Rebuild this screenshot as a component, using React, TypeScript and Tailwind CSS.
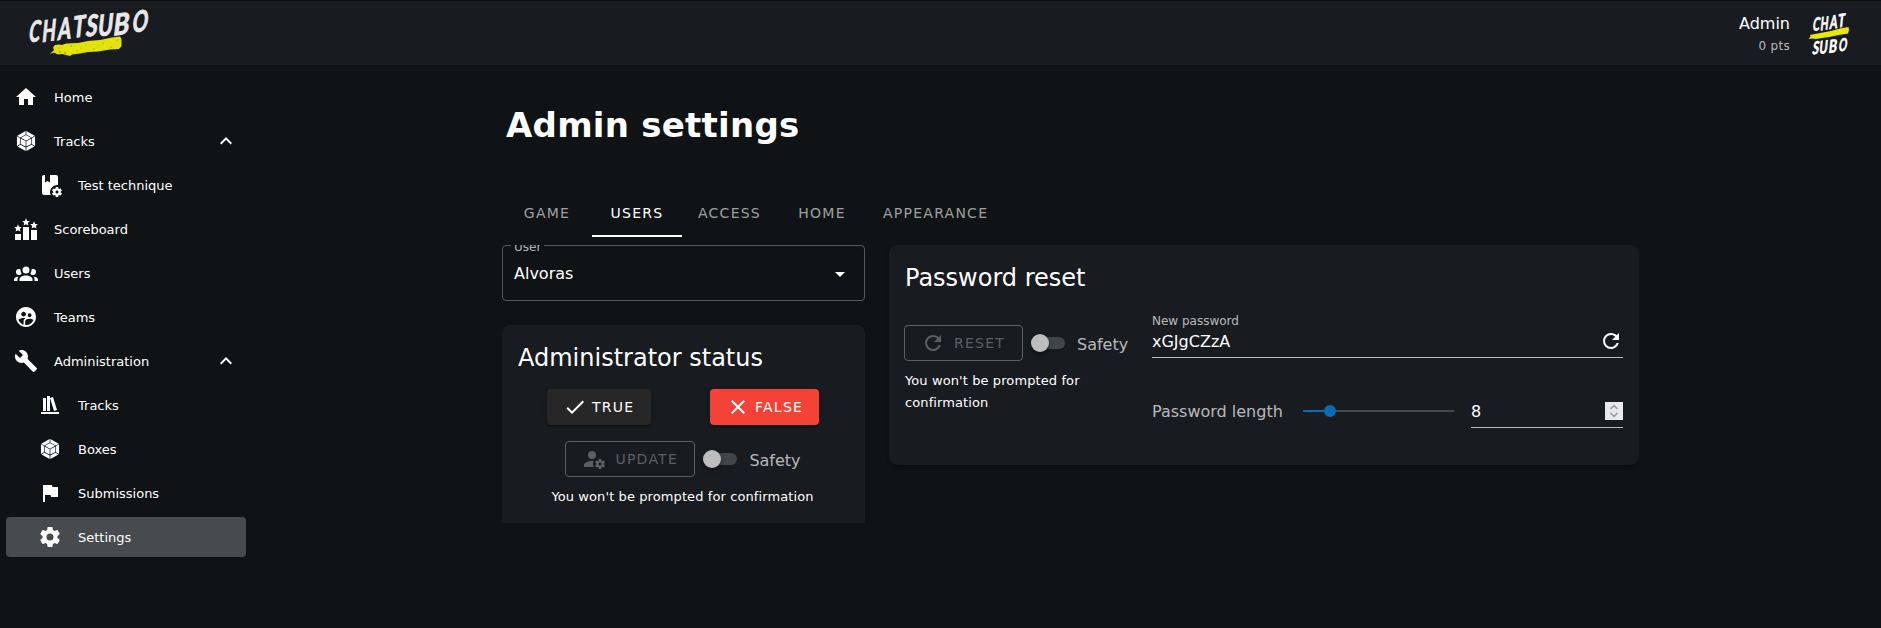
import React from "react";
import { MdSupervisedUserCircle } from "react-icons/md";
import { SiWebpack } from "react-icons/si";

const COG =
  "M17 12C16.87 12 16.76 12.09 16.74 12.21L16.55 13.53C16.25 13.66 15.96 13.82 15.7 14L14.46 13.5C14.35 13.5 14.22 13.5 14.15 13.63L13.15 15.36C13.09 15.47 13.11 15.6 13.21 15.68L14.27 16.5C14.25 16.67 14.24 16.83 14.24 17C14.24 17.17 14.25 17.33 14.27 17.5L13.21 18.32C13.12 18.4 13.09 18.53 13.15 18.64L14.15 20.37C14.21 20.5 14.34 20.5 14.46 20.5L15.7 20C15.96 20.18 16.24 20.35 16.55 20.47L16.74 21.79C16.76 21.91 16.86 22 17 22H19C19.11 22 19.22 21.91 19.24 21.79L19.43 20.47C19.73 20.34 20 20.18 20.27 20L21.5 20.5C21.63 20.5 21.76 20.5 21.83 20.37L22.83 18.64C22.89 18.53 22.86 18.4 22.77 18.32L21.7 17.5C21.72 17.33 21.74 17.17 21.74 17C21.74 16.83 21.73 16.67 21.7 16.5L22.76 15.68C22.85 15.6 22.88 15.47 22.82 15.36L21.82 13.63C21.76 13.5 21.63 13.5 21.5 13.5L20.27 14C20 13.82 19.73 13.65 19.42 13.53L19.23 12.21C19.22 12.09 19.11 12 19 12H17M18 15.5C18.83 15.5 19.5 16.17 19.5 17C19.5 17.84 18.83 18.5 18 18.5C17.16 18.5 16.5 17.84 16.5 17C16.5 16.17 17.17 15.5 18 15.5Z";

const PATHS = {
  home: "M10,20V14H14V20H19V12H22L12,3L2,12H5V20H10Z",
  chevronUp: "M7.41,15.41L12,10.83L16.59,15.41L18,14L12,8L6,14L7.41,15.41Z",
  group:
    "M12,5.5A3.5,3.5 0 0,1 15.5,9A3.5,3.5 0 0,1 12,12.5A3.5,3.5 0 0,1 8.5,9A3.5,3.5 0 0,1 12,5.5M5,8C5.56,8 6.08,8.15 6.53,8.42C6.38,9.85 6.8,11.27 7.66,12.38C7.16,13.34 6.16,14 5,14A3,3 0 0,1 2,11A3,3 0 0,1 5,8M19,8A3,3 0 0,1 22,11A3,3 0 0,1 19,14C17.84,14 16.84,13.34 16.34,12.38C17.2,11.27 17.62,9.85 17.47,8.42C17.92,8.15 18.44,8 19,8M5.5,18.25C5.5,16.18 8.41,14.5 12,14.5C15.59,14.5 18.5,16.18 18.5,18.25V20H5.5V18.25M0,20V18.5C0,17.11 1.89,15.94 4.45,15.6C3.86,16.28 3.5,17.22 3.5,18.25V20H0M24,20H20.5V18.25C20.5,17.22 20.14,16.28 19.55,15.6C22.11,15.94 24,17.11 24,18.5V20Z",
  wrench:
    "M22.7,19L13.6,9.9C14.5,7.6 14,4.9 12.1,3C10.1,1 7.1,0.6 4.7,1.7L9,6L6,9L1.6,4.7C0.4,7.1 0.9,10.1 2.9,12.1C4.8,14 7.5,14.5 9.8,13.6L18.9,22.7C19.3,23.1 19.9,23.1 20.3,22.7L22.6,20.4C23.1,20 23.1,19.3 22.7,19Z",
  bookshelf: "M9 3V18H12V3H9M12 5L16 18L19 17L15 4L12 5M5 5V18H8V5H5M3 19V21H21V19H3Z",
  flag: "M14.4,6L14,4H5V21H7V14H12.6L13,16H20V6H14.4Z",
  cog: "M12,15.5A3.5,3.5 0 0,1 8.5,12A3.5,3.5 0 0,1 12,8.5A3.5,3.5 0 0,1 15.5,12A3.5,3.5 0 0,1 12,15.5M19.43,12.97C19.47,12.65 19.5,12.33 19.5,12C19.5,11.67 19.47,11.34 19.43,11L21.54,9.37C21.73,9.22 21.78,8.95 21.66,8.73L19.66,5.27C19.54,5.05 19.27,4.96 19.05,5.05L16.56,6.05C16.04,5.66 15.5,5.32 14.87,5.07L14.5,2.42C14.46,2.18 14.25,2 14,2H10C9.75,2 9.54,2.18 9.5,2.42L9.13,5.07C8.5,5.32 7.96,5.66 7.44,6.05L4.95,5.05C4.73,4.96 4.46,5.05 4.34,5.27L2.34,8.73C2.21,8.95 2.27,9.22 2.46,9.37L4.57,11C4.53,11.34 4.5,11.67 4.5,12C4.5,12.33 4.53,12.65 4.57,12.97L2.46,14.63C2.27,14.78 2.21,15.05 2.34,15.27L4.34,18.73C4.46,18.95 4.73,19.03 4.95,18.95L7.44,17.94C7.96,18.34 8.5,18.68 9.13,18.93L9.5,21.58C9.54,21.82 9.75,22 10,22H14C14.25,22 14.46,21.82 14.5,21.58L14.87,18.93C15.5,18.67 16.04,18.34 16.56,17.94L19.05,18.95C19.27,19.03 19.54,18.95 19.66,18.73L21.66,15.27C21.78,15.05 21.73,14.78 21.54,14.63L19.43,12.97Z",
  check: "M21,7L9,19L3.5,13.5L4.91,12.09L9,16.17L19.59,5.59L21,7Z",
  close:
    "M19,6.41L17.59,5L12,10.59L6.41,5L5,6.41L10.59,12L5,17.59L6.41,19L12,13.41L17.59,19L19,17.59L13.41,12L19,6.41Z",
  refresh:
    "M17.65,6.35C16.2,4.9 14.21,4 12,4A8,8 0 0,0 4,12A8,8 0 0,0 12,20C15.73,20 18.84,17.45 19.73,14H17.65C16.83,16.33 14.61,18 12,18A6,6 0 0,1 6,12A6,6 0 0,1 12,6C13.66,6 15.14,6.69 16.22,7.78L13,11H20V4L17.65,6.35Z",
  menuDown: "M7,10L12,15L17,10H7Z",
  accountCog:
    "M10 4A4 4 0 0 0 6 8A4 4 0 0 0 10 12A4 4 0 0 0 14 8A4 4 0 0 0 10 4M10 14C5.58 14 2 15.79 2 18V20H11.68A7 7 0 0 1 11 17A7 7 0 0 1 11.64 14.09C11.11 14.03 10.56 14 10 14" +
    COG,
  book: "M6 2H7V9.5L9.5 8L12 9.5V2H18A2 2 0 0 1 20 4V12.1A7 7 0 0 0 12.7 22H6A2 2 0 0 1 4 20V4A2 2 0 0 1 6 2Z",
};

function Icon({ name, className = "" }: { name: keyof typeof PATHS; className?: string }) {
  return (
    <svg viewBox="0 0 24 24" className={`size-6 shrink-0 fill-current ${className}`}>
      <path d={PATHS[name]} />
    </svg>
  );
}

function BookCogIcon() {
  return (
    <svg viewBox="0 0 24 24" className="size-6 fill-current">
      <path d={PATHS.book} />
      <path d={COG} transform="translate(1 2)" />
    </svg>
  );
}

function RankingIcon() {
  const star = "M0-4L1.1-1.4L3.8-1.2L1.8.6L2.4 3.3L0 1.9L-2.4 3.3L-1.8.6L-3.8-1.2L-1.1-1.4Z";
  return (
    <svg viewBox="0 0 24 24" className="size-6 fill-current">
      <path d="M1 17H7V23H1ZM9 10H15V23H9ZM17 13H23V23H17Z" />
      <path d={star} transform="translate(4 11.3)" />
      <path d={star} transform="translate(12 5.3)" />
      <path d={star} transform="translate(20 8.3)" />
    </svg>
  );
}

const PackIcon = () => (
  <span className="flex size-6 items-center justify-center">
    <SiWebpack className="size-5" />
  </span>
);

type Letter = [char: string, x: number, y: number, tilt: number, squeeze: number];

function BrushWord({ letters, size }: { letters: Letter[]; size: number }) {
  return (
    <g fontFamily="Lato, 'Liberation Sans', sans-serif" fontWeight="700" fontStyle="italic" fontSize={size} textAnchor="middle">
      {letters.map(([c, x, y, tilt, squeeze], i) => (
        <text key={i} transform={`translate(${x} ${y}) rotate(${tilt}) skewX(-9) scale(${squeeze} 1)`}>
          {c}
        </text>
      ))}
    </g>
  );
}

function WideLogo() {
  return (
    <svg viewBox="0 0 136 56" className="mt-[7px] h-14 w-[136px]">
      <path
        fill="#e3e30c"
        d="M30 46L34 42L33 39.5L35 37L39 36.5L42 37L46 35.5L58 35L68 33L80 32L92 29.5L100 28.5L101.5 31L101.5 38L99 41L90 41.5L78 43.5L68 44L60 45.5L52 46.5L50 48L42 46L38 46.5L34 44.5Z"
      />
      <g fill="#77790f">
        <circle cx="39" cy="40" r=".6" />
        <circle cx="40" cy="44" r=".8" />
        <circle cx="45" cy="45" r=".7" />
        <circle cx="51" cy="38" r=".6" />
        <circle cx="57" cy="43" r=".6" />
        <circle cx="61" cy="40" r=".4" />
        <circle cx="66" cy="37" r=".5" />
        <circle cx="74" cy="41" r=".6" />
        <circle cx="78" cy="37" r=".4" />
        <circle cx="83" cy="35" r=".5" />
        <circle cx="91" cy="39" r=".6" />
        <circle cx="97" cy="32" r=".5" />
      </g>
      <g fill="#e8e8e8" stroke="#e8e8e8" strokeWidth=".9">
        <BrushWord
          size={29}
          letters={[
            ["C", 14, 33.5, -4, 0.62],
            ["H", 29, 33, -8, 0.66],
            ["A", 44.5, 31, -8, 0.7],
            ["T", 59, 29, -8, 0.76],
            ["S", 71.5, 28, -6, 0.78],
            ["U", 85.5, 27.5, -8, 0.76],
            ["B", 101.5, 26.5, -8, 0.9],
            ["O", 119.5, 23.5, -4, 0.7],
          ]}
        />
      </g>
    </svg>
  );
}

function SquareLogo() {
  return (
    <svg viewBox="0 0 48 48" className="size-12">
      <g fill="#fff" stroke="#fff" strokeWidth=".6">
        <BrushWord
          size={18}
          letters={[
            ["C", 9, 22.5, -4, 0.62],
            ["H", 17.5, 22, -8, 0.62],
            ["A", 26.5, 20.5, -8, 0.66],
            ["T", 34.5, 19, -8, 0.7],
          ]}
        />
        <BrushWord
          size={17.5}
          letters={[
            ["S", 8.5, 46, -4, 0.7],
            ["U", 16.5, 45.5, -8, 0.7],
            ["B", 26, 44.5, -8, 0.78],
            ["O", 35.5, 43, -4, 0.62],
          ]}
        />
      </g>
      <path
        fill="#e8e80c"
        d="M1.5 31L3.5 28.5L3 27L8 26L16 24.5L24 23L33 20.5L41.5 19L42 22L41 25.5L32 27L22 29L15 30L9 31L5 30.5Z"
      />
    </svg>
  );
}

type NavItem = { label: string; icon: React.ReactNode; nested?: boolean; open?: boolean; active?: boolean };

const NAV: NavItem[] = [
  { label: "Home", icon: <Icon name="home" /> },
  { label: "Tracks", icon: <PackIcon />, open: true },
  { label: "Test technique", icon: <BookCogIcon />, nested: true },
  { label: "Scoreboard", icon: <RankingIcon /> },
  { label: "Users", icon: <Icon name="group" /> },
  { label: "Teams", icon: <MdSupervisedUserCircle className="size-6" /> },
  { label: "Administration", icon: <Icon name="wrench" />, open: true },
  { label: "Tracks", icon: <Icon name="bookshelf" />, nested: true },
  { label: "Boxes", icon: <PackIcon />, nested: true },
  { label: "Submissions", icon: <Icon name="flag" />, nested: true },
  { label: "Settings", icon: <Icon name="cog" />, nested: true, active: true },
];

function Sidebar() {
  return (
    <nav className="flex w-[246px] shrink-0 flex-col gap-1 pt-3 pl-1.5">
      {NAV.map((item, i) => (
        <a
          key={i}
          className={`flex h-10 items-center rounded pr-2 ${item.nested ? "pl-8" : "pl-2"} ${
            item.active ? "bg-[#484b4d]" : ""
          }`}
        >
          {item.icon}
          <span className="ml-4 flex-1 pt-px text-[13px] leading-4">{item.label}</span>
          {item.open && <Icon name="chevronUp" />}
        </a>
      ))}
    </nav>
  );
}

function Tabs() {
  const tabs = ["Game", "Users", "Access", "Home", "Appearance"];
  return (
    <div className="flex h-12">
      {tabs.map((t) => (
        <button
          key={t}
          className={`min-w-[90px] border-b-2 px-4 pt-0.5 text-sm tracking-[1.25px] uppercase ${
            t === "Users" ? "border-white text-white" : "border-transparent text-white/60"
          }`}
        >
          {t}
        </button>
      ))}
    </div>
  );
}

function SafetySwitch() {
  return (
    <label className="flex items-center">
      <span className="flex h-3 w-[34px] items-center rounded-full bg-[#424549]">
        <span className="size-[18px] shrink-0 rounded-full bg-[#bdbdbd] shadow-[0_2px_4px_rgba(0,0,0,0.4)]" />
      </span>
      <span className="ml-3 pt-1 text-base leading-5 text-white/70">Safety</span>
    </label>
  );
}

function UserSelect() {
  return (
    <fieldset className="-mt-[9px] h-[65px] rounded border border-[#56595b]">
      <legend className="ml-2 h-[18px] w-[33px] pt-0.5 pl-[3px] text-xs leading-[18px] text-white/70">User</legend>
      <div className="flex h-10 items-center justify-between pr-3 pl-[11px]">
        <span className="text-base leading-5">Alvoras</span>
        <Icon name="menuDown" />
      </div>
    </fieldset>
  );
}

const BTN = "flex h-9 items-center rounded text-sm tracking-[1.25px] uppercase ";
const RAISED = "shadow-[0_3px_1px_-2px_rgba(0,0,0,0.2),0_2px_2px_rgba(0,0,0,0.14),0_1px_5px_rgba(0,0,0,0.12)] ";

function StatusCard() {
  return (
    <section className={RAISED + "mt-6 h-[260px] rounded-lg bg-[#181b1f] px-4 pt-[17px]"}>
      <h2 className="text-2xl leading-8">Administrator status</h2>
      <div className="mt-[15px] flex justify-center gap-[59px] pr-px">
        <button className={BTN + RAISED + "w-[104px] gap-[5px] bg-[#272727] pl-4"}>
          <Icon name="check" />
          True
        </button>
        <button className={BTN + RAISED + "w-[109px] gap-[5px] bg-[#f44336] pl-4"}>
          <Icon name="close" />
          False
        </button>
      </div>
      <div className="mt-4 flex justify-center gap-2 pr-px">
        <button className={BTN + "w-[130px] gap-[9px] border border-[#5d5f62] pl-4 text-[#5d5f62]"}>
          <Icon name="accountCog" />
          Update
        </button>
        <SafetySwitch />
      </div>
      <p className="mt-[9px] pr-0.5 text-center text-[13px] leading-[22px] tracking-[0.1px]">
        You won't be prompted for confirmation
      </p>
    </section>
  );
}

function PasswordCard() {
  return (
    <section className={RAISED + "h-[220px] w-[750px] rounded-lg bg-[#181b1f] px-4 pt-[17px]"}>
      <h2 className="text-2xl leading-8">Password reset</h2>
      <div className="flex">
        <div className="w-[247px] pt-[31px]">
          <div className="-ml-px flex gap-2">
            <button className={BTN + "w-[119px] gap-[9px] border border-[#5d5f62] pl-4 text-[#5d5f62]"}>
              <Icon name="refresh" />
              Reset
            </button>
            <SafetySwitch />
          </div>
          <p className="mt-[9px] w-[200px] text-[13px] leading-[22px] tracking-[0.1px]">
            You won't be prompted for confirmation
          </p>
        </div>
        <div className="w-[471px] pt-[18px]">
          <div className="flex h-[46px] items-end justify-between border-b border-white/70 pb-1">
            <div>
              <div className="text-xs leading-4 text-white/70">New password</div>
              <div className="mt-[3px] pb-px text-base leading-5">xGJgCZzA</div>
            </div>
            <Icon name="refresh" />
          </div>
          <div className="mt-[38px] flex h-8 items-start">
            <span className="w-[151px] pt-1.5 text-base leading-5 text-white/70">Password length</span>
            <div className="mt-[9px] flex h-3 w-[151px] items-center">
              <span className="h-0.5 w-[21px] bg-[#0c6bb1]" />
              <span className="size-3 rounded-full bg-[#0c6bb1]" />
              <span className="h-0.5 flex-1 bg-[#46494c]" />
            </div>
            <div className="ml-[17px] flex h-8 flex-1 items-start justify-between border-b border-white/70">
              <span className="pt-1.5 text-base leading-5">8</span>
              <span className="mt-1.5 flex h-[18px] w-[18px] items-center justify-center bg-[#e9e9ed]">
                <svg viewBox="0 0 18 18" className="size-[18px] fill-none stroke-[#9a9aa2] stroke-[1.6]">
                  <path d="M5.5 6.8L9 3.6L12.5 6.8M5.5 11.2L9 14.4L12.5 11.2" />
                </svg>
              </span>
            </div>
          </div>
        </div>
      </div>
    </section>
  );
}

export default function App() {
  return (
    <div className="flex h-[628px] w-[1881px] flex-col overflow-hidden bg-[#0f1315] font-['DejaVu_Sans',sans-serif] text-white">
      <header className="flex h-[65px] shrink-0 items-start justify-between border-t border-[#0c0d0f] bg-[#181b1f] pr-[26px] pl-5">
        <WideLogo />
        <div className="flex pt-[7px]">
          <div className="pt-1.5 pr-[17px] text-right">
            <div className="text-base leading-5">Admin</div>
            <div className="mt-1 text-xs leading-4 tracking-[0.3px] text-white/70">0 pts</div>
          </div>
          <SquareLogo />
        </div>
      </header>
      <div className="flex min-h-0 flex-1">
        <Sidebar />
        <main className="ml-64 w-[1137px]">
          <h1 className="mt-10 pl-1 text-[34px] leading-10 font-bold tracking-[0.25px]">Admin settings</h1>
          <div className="mt-11">
            <Tabs />
          </div>
          <div className="mt-2 flex h-[278px] gap-6 overflow-hidden">
            <div className="w-[363px]">
              <UserSelect />
              <StatusCard />
            </div>
            <PasswordCard />
          </div>
        </main>
      </div>
    </div>
  );
}
